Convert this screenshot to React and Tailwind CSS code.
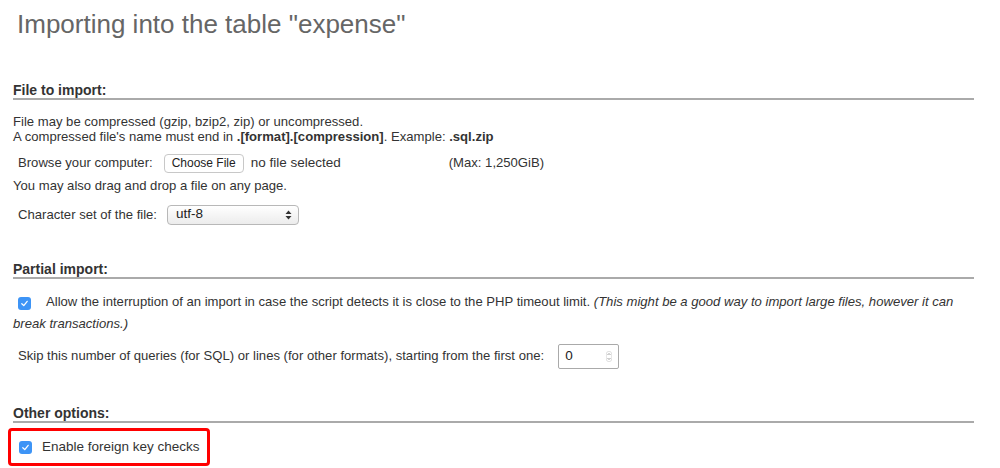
import React from 'react';

const font = { fontFamily: '"Liberation Sans", Arial, sans-serif' };

const Check = () => (
    <span className="inline-flex w-[13px] h-[13px] shrink-0 items-center justify-center rounded-[3px] bg-[#3d94f6]">
        <svg width="9" height="9" viewBox="0 0 10 10">
            <path d="M2 5.2 L4.2 7.4 L8 2.6" fill="none" stroke="white" strokeWidth="1.4" strokeLinecap="round" strokeLinejoin="round" />
        </svg>
    </span>
);

const Heading = ({ children, className = '' }) => (
    <h3 className={`text-[14px] font-bold text-[#333] leading-[14px] pb-[1px] border-b-2 border-[#aaa] ${className}`}>
        {children}
    </h3>
);

export default function App() {
    return (
        <div className="w-[1000px] h-[468px] bg-white overflow-hidden text-[13.1px] text-[#333]" style={font}>
            <h1 className="pl-[17px] pt-[9px] text-[26px] leading-[30px] text-[#666] font-normal">
                Importing into the table "expense"
            </h1>

            <div className="ml-[13px] mr-[26px]">
                {/* File to import */}
                <Heading className="mt-[44px]">File to import:</Heading>
                <div className="mt-[14px] leading-[15px]">
                    <p>File may be compressed (gzip, bzip2, zip) or uncompressed.</p>
                    <p>A compressed file's name must end in <b>.[format].[compression]</b>. Example: <b>.sql.zip</b></p>
                </div>
                <div className="mt-[9px] flex items-center h-[20px] pl-[5px]">
                    <span>Browse your computer:</span>
                    <span className="ml-[11px] h-[19px] px-[7px] flex items-center rounded-[4px] border border-[#c8c8c8] bg-white text-[12px] text-[#222]">Choose File</span>
                    <span className="ml-[7px] text-[13.5px]">no file selected</span>
                    <span className="ml-[108px]">(Max: 1,250GiB)</span>
                </div>
                <p className="mt-[5px] leading-[15px]">You may also drag and drop a file on any page.</p>
                <div className="mt-[11px] flex items-center h-[21px] pl-[5px]">
                    <span>Character set of the file:</span>
                    <div className="ml-[10px] w-[132px] h-[20px] flex items-center justify-between pl-[8px] pr-[6px] rounded-[4px] border border-[#b8b8b8] bg-gradient-to-b from-white to-[#ececec] text-[#222] text-[13.5px]">
                        <span>utf-8</span>
                        <svg width="7" height="10" viewBox="0 0 7 10">
                            <path d="M0.5 4 L3.5 0.5 L6.5 4 Z M0.5 6 L3.5 9.5 L6.5 6 Z" fill="#333" />
                        </svg>
                    </div>
                </div>

                {/* Partial import */}
                <Heading className="mt-[37px]">Partial import:</Heading>
                <div className="mt-[12px] leading-[22px]">
                    <span className="inline-flex align-[-2px] ml-[5px] mr-[15px]"><Check /></span>
                    Allow the interruption of an import in case the script detects it is close to the PHP timeout limit.{' '}
                    <i>(This might be a good way to import large files, however it can break transactions.)</i>
                </div>
                <div className="mt-[8px] flex items-center h-[26px] pl-[5px]">
                    <span>Skip this number of queries (for SQL) or lines (for other formats), starting from the first one:</span>
                    <div className="ml-[14px] w-[61px] h-[25px] flex items-center justify-between pl-[6px] pr-[6px] rounded-[2px] border border-[#aaa] bg-white text-[#222] text-[13.5px]">
                        <span>0</span>
                        <svg width="6" height="11" viewBox="0 0 6 11">
                            <rect x="0.3" y="0.3" width="5.4" height="10.4" rx="2.7" fill="none" stroke="#ccc" strokeWidth="0.6" />
                            <path d="M1.5 4 L3 2.5 L4.5 4 M1.5 7 L3 8.5 L4.5 7" fill="none" stroke="#888" strokeWidth="0.8" />
                        </svg>
                    </div>
                </div>

                {/* Other options */}
                <Heading className="mt-[37px]">Other options:</Heading>
            </div>
            <div className="ml-[8px] mt-[5px] w-[202px] h-[38px] flex items-center pl-[8px] rounded-[4px] border-[3px] border-[#f00]">
                <Check />
                <span className="ml-[10px] text-[13.5px]">Enable foreign key checks</span>
            </div>
        </div>
    );
}
